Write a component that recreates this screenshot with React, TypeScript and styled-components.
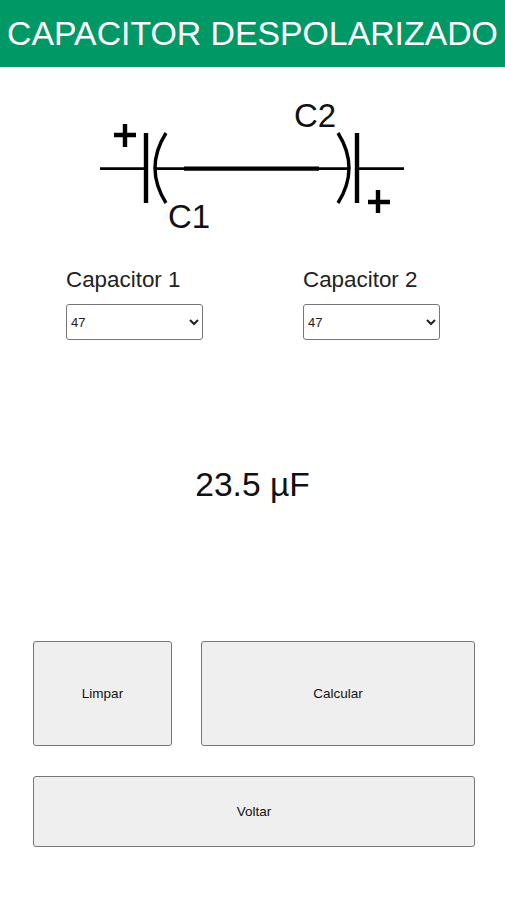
import { useState } from 'react';
import styled, { createGlobalStyle } from 'styled-components';

const GlobalStyle = createGlobalStyle`
  html, body {
    margin: 0;
    padding: 0;
    background: #fff;
    font-family: "Liberation Sans", Arial, sans-serif;
  }
`;

const Page = styled.div`
  width: 505px;
  height: 900px;
  display: flex;
  flex-direction: column;
  overflow: hidden;
`;

const Header = styled.header`
  height: 67px;
  display: flex;
  align-items: center;
  justify-content: center;
  background: #009966;
  color: #fff;
  font-size: 33.8px;
  white-space: nowrap;
`;

const Diagram = styled.svg`
  display: block;
  width: 505px;
  height: 200px;
  flex: none;
`;

const Selectors = styled.div`
  display: flex;
  gap: 100px;
  padding-left: 66px;
`;

const Field = styled.label`
  display: flex;
  flex-direction: column;
  gap: 12px;
  width: 137px;
  color: #222;
  font-size: 22.4px;
  line-height: 25px;
  white-space: nowrap;
`;

const Picker = styled.select`
  width: 137px;
  height: 36px;
  box-sizing: border-box;
  background: #fff;
  border: 1px solid #767676;
  border-radius: 3px;
  color: #222;
  font-family: inherit;
  font-size: 13px;
`;

const Result = styled.div`
  margin-top: 124px;
  height: 42px;
  line-height: 42px;
  text-align: center;
  color: #111;
  font-size: 33.6px;
`;

const Actions = styled.div`
  margin-top: 135px;
  padding: 0 30px 0 33px;
  display: grid;
  grid-template-columns: 139px 274px;
  grid-auto-rows: auto;
  column-gap: 29px;
  row-gap: 30px;
`;

const ActionButton = styled.button<{ $wide?: boolean }>`
  height: ${(p) => (p.$wide ? '71px' : '105px')};
  grid-column: ${(p) => (p.$wide ? '1 / -1' : 'auto')};
  background: #efefef;
  border: 1px solid #767676;
  border-radius: 3px;
  color: #111;
  font-family: inherit;
  font-size: 13.5px;
  padding: 0;
`;

const options = ['10', '22', '33', '47', '100', '220', '470'];

export default function App() {
  const [c1, setC1] = useState('47');
  const [c2, setC2] = useState('47');

  return (
    <Page>
      <GlobalStyle />
      <Header>CAPACITOR DESPOLARIZADO</Header>
      <Diagram viewBox="0 67 505 200">
        <g fill="none" stroke="#000">
          <path d="M100 168.7H146M155 168.7H184M319 168.7H348M357 168.7H404" strokeWidth="2.8" />
          <path d="M184 168.7H319" strokeWidth="4.2" />
          <path d="M146 133V203M357 133V203" strokeWidth="4.4" />
          <path d="M166 133Q144 168 166 203M338 133Q360 168 338 203" strokeWidth="3.4" />
          <path d="M114 135H136M125 124V147M368 202H390M378 190V213" strokeWidth="4.4" />
        </g>
        <g fill="#111" fontFamily="'Liberation Sans', Arial, sans-serif" fontSize="33">
          <text x="168" y="228">C1</text>
          <text x="294" y="127">C2</text>
        </g>
      </Diagram>
      <Selectors>
        <Field>
          Capacitor 1
          <Picker value={c1} onChange={(e) => setC1(e.target.value)}>
            {options.map((o) => (
              <option key={o}>{o}</option>
            ))}
          </Picker>
        </Field>
        <Field>
          Capacitor 2
          <Picker value={c2} onChange={(e) => setC2(e.target.value)}>
            {options.map((o) => (
              <option key={o}>{o}</option>
            ))}
          </Picker>
        </Field>
      </Selectors>
      <Result>23.5 µF</Result>
      <Actions>
        <ActionButton>Limpar</ActionButton>
        <ActionButton>Calcular</ActionButton>
        <ActionButton $wide>Voltar</ActionButton>
      </Actions>
    </Page>
  );
}
